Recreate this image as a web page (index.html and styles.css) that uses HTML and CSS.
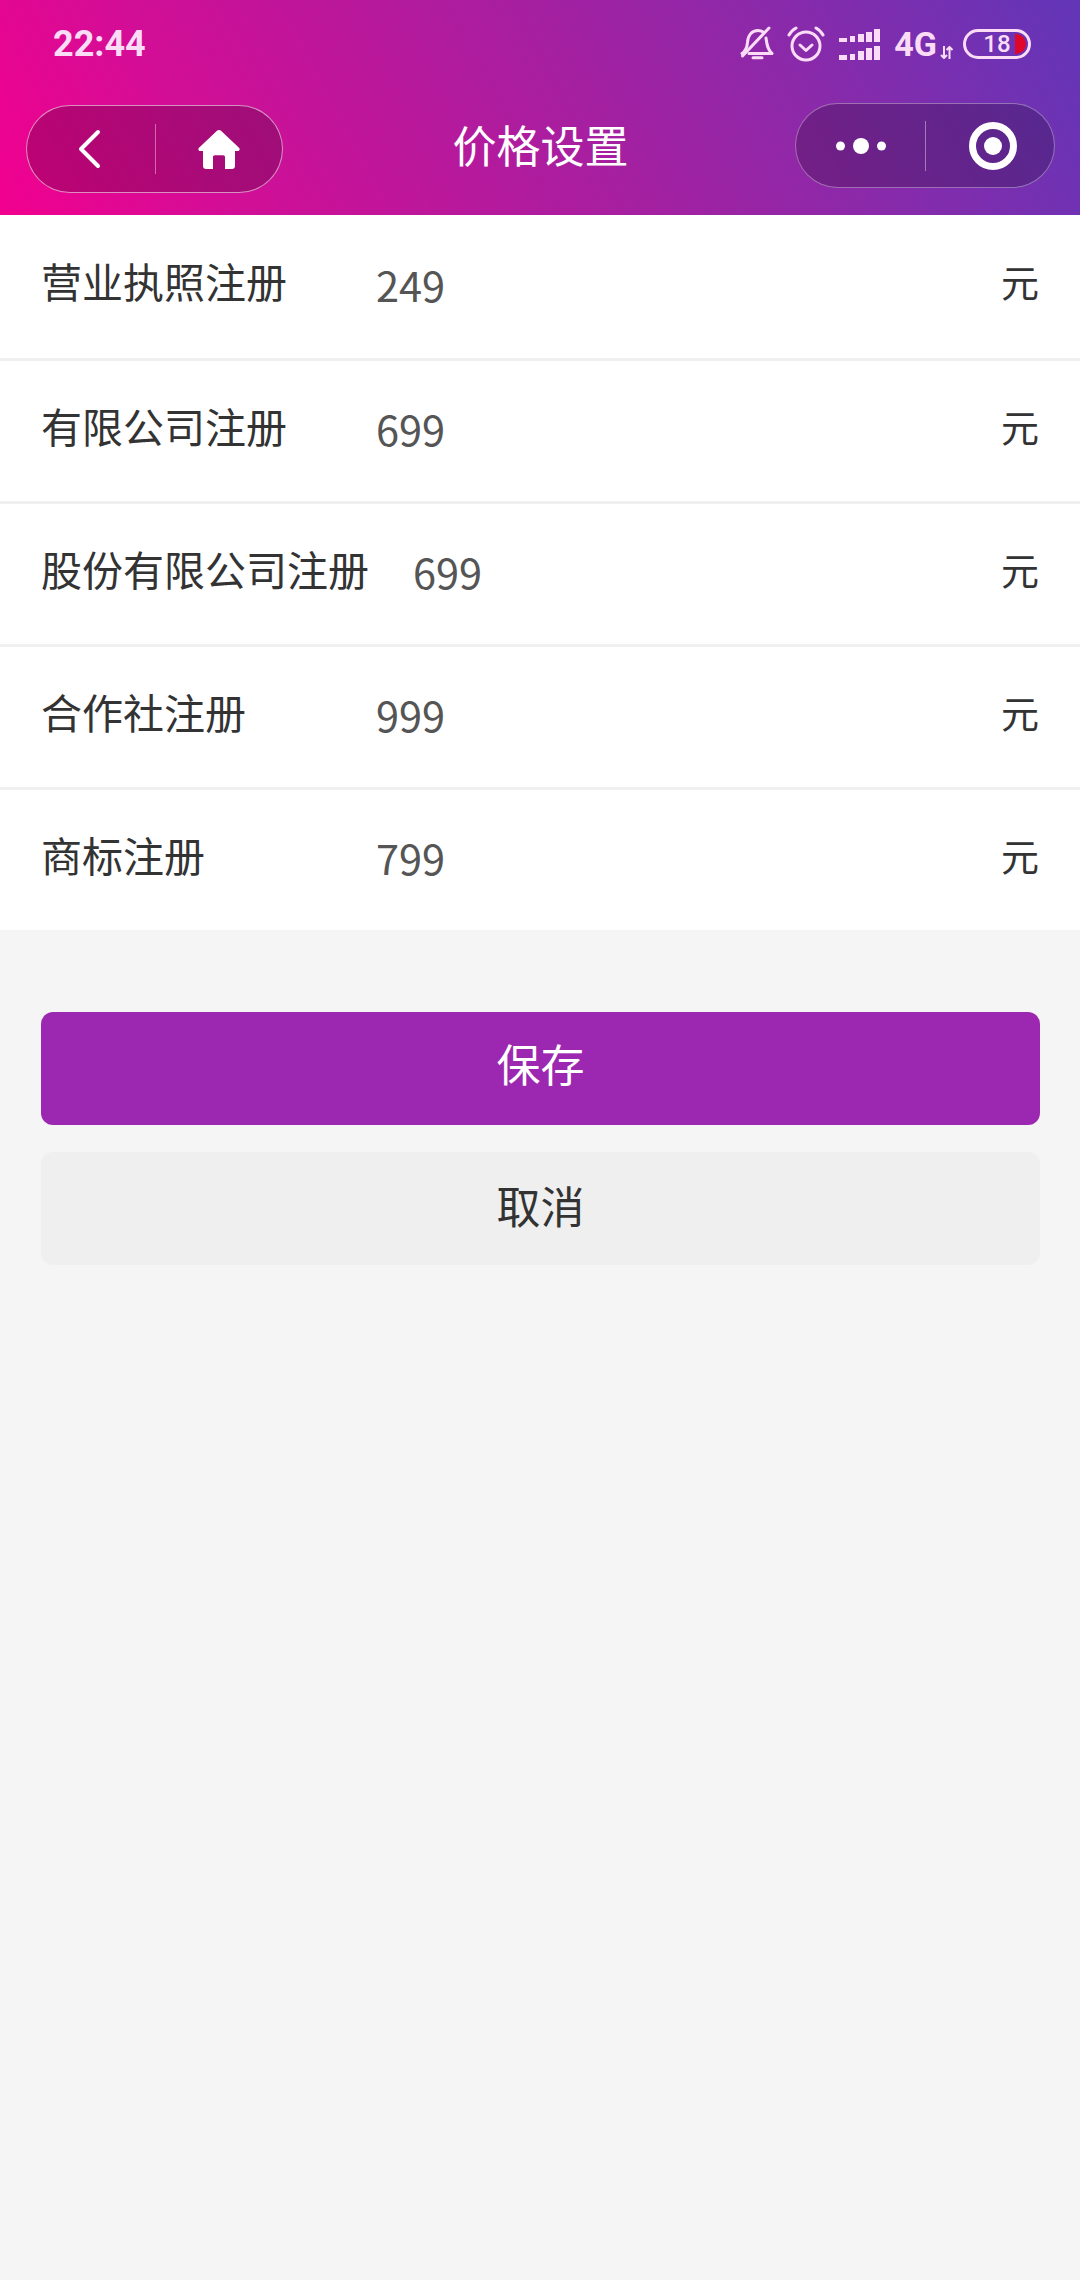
FILE: index.html
```html
<!DOCTYPE html>
<html lang="zh">
<head>
  <meta charset="utf-8">
  <title>价格设置</title>
  <link rel="stylesheet" href="styles.css">
</head>
<body>
  <header class="top">
    <div class="status">
      <span class="time">22:44</span>
      <div class="status-icons">
        <svg class="ic-bell" width="34" height="34" viewBox="0 0 34 34" fill="none" stroke="#fbdcf6" stroke-width="3" stroke-linecap="round" stroke-linejoin="round">
          <path d="M2 27.500c4-2.500 5-5.500 5.500-11C8 9 12 4.500 18 4.500c2.500 0 4.500 .8 6 2.200M26 12c.8 6 1.500 12 6 15.500H9"/>
          <path d="M2.500 30 29 2"/>
          <path d="M13 31.800h9"/>
        </svg>
        <svg class="ic-alarm" width="38" height="36" viewBox="0 0 38 36" fill="none" stroke="#fbdcf6" stroke-width="3" stroke-linecap="round" stroke-linejoin="round">
          <circle cx="19" cy="20" r="14"/>
          <path d="M13 19l6 5.500 6-5.500"/>
          <path d="M2 9c1.500-3 3.500-5 7-7M36 9c-1.500-3-3.500-5-7-7"/>
        </svg>
        <svg class="ic-signal" width="41" height="32" viewBox="0 0 41 32" fill="#fbdcf6">
          <rect x="0" y="9" width="8" height="4"/><rect x="11" y="7" width="5" height="6"/><rect x="19" y="5" width="6" height="8"/><rect x="27" y="3" width="6" height="10"/><rect x="35" y="0" width="6" height="13"/>
          <rect x="0" y="26" width="8" height="5"/><rect x="11" y="25" width="5" height="6"/><rect x="19" y="22" width="6" height="9"/><rect x="27" y="19" width="6" height="12"/><rect x="35" y="17" width="6" height="14"/>
        </svg>
        <span class="net">4G</span>
        <svg class="ic-arrows" width="13" height="13" viewBox="0 0 13 13" fill="none" stroke="#fbdcf6" stroke-width="2">
          <path d="M4 0v12M1 9l3 3 3-3M9.500 13V1M6.500 4l3-3 3 3"/>
        </svg>
        <div class="battery"><span class="battery-num">18</span><i class="battery-fill"></i></div>
      </div>
    </div>
    <nav class="nav">
      <div class="capsule capsule-left">
        <div class="capsule-cell cell-back">
          <svg width="24" height="40" viewBox="0 0 24 40" fill="none" stroke="#fff" stroke-width="4" stroke-linecap="round" stroke-linejoin="round"><path d="M21 3 4 20l17 17"/></svg>
        </div>
        <div class="capsule-cell">
          <svg width="42" height="39" viewBox="0 0 42 39" fill="#fff"><path d="M21 0c.8 0 1.500 .3 2 .8l18 17c1.300 1.200 .5 3.200-1.300 3.200H37v15c0 1.700-1.300 3-3 3h-7V27c0-1-.8-1.800-1.800-1.800h-8.400c-1 0-1.800 .8-1.800 1.800v12H8c-1.700 0-3-1.300-3-3V21H2.300C.5 21-.3 19 1 17.800l18-17c.5-.5 1.200-.8 2-.8z"/></svg>
        </div>
      </div>
      <h1 class="title">价格设置</h1>
      <div class="capsule capsule-right">
        <div class="capsule-cell">
          <svg width="50" height="18" viewBox="0 0 50 18" fill="#fff"><circle cx="4.500" cy="9" r="4.500"/><circle cx="25" cy="9" r="8"/><circle cx="45.500" cy="9" r="4.500"/></svg>
        </div>
        <div class="capsule-cell cell-target">
          <svg width="48" height="48" viewBox="0 0 48 48"><circle cx="24" cy="24" r="20.500" fill="none" stroke="#fff" stroke-width="7"/><circle cx="24" cy="24" r="9" fill="#fff"/></svg>
        </div>
      </div>
    </nav>
  </header>

  <section class="list">
    <div class="row"><div class="row-label">营业执照注册</div><div class="row-value">249</div><div class="row-unit">元</div></div>
    <div class="row"><div class="row-label">有限公司注册</div><div class="row-value">699</div><div class="row-unit">元</div></div>
    <div class="row"><div class="row-label">股份有限公司注册</div><div class="row-value">699</div><div class="row-unit">元</div></div>
    <div class="row"><div class="row-label">合作社注册</div><div class="row-value">999</div><div class="row-unit">元</div></div>
    <div class="row"><div class="row-label">商标注册</div><div class="row-value">799</div><div class="row-unit">元</div></div>
  </section>

  <div class="actions">
    <button class="btn btn-save" type="button">保存</button>
    <button class="btn btn-cancel" type="button">取消</button>
  </div>
</body>
</html>
```

FILE: styles.css
```css
* {
  box-sizing: border-box;
}

body {
  margin: 0;
  height: 2280px;
  overflow: hidden;
  background-color: #f5f5f5;
  font-family: "Noto Sans CJK SC", "Noto Sans", sans-serif;
  color: #333;
}

/* header */
.top {
  height: 215px;
  background: linear-gradient(62deg, #f2008f 0%, #d20e96 20%, #aa1e9f 50%, #8f28a8 70%, #6236b8 100%);
}

.status {
  height: 103px;
  padding: 26px 49px 0 53px;
  display: flex;
  justify-content: space-between;
  align-items: flex-start;
}

.time {
  font-family: Roboto, sans-serif;
  font-size: 36px;
  font-weight: 700;
  line-height: 36px;
  color: #fbdcf6;
}

.status-icons {
  display: flex;
  align-items: flex-start;
}

.ic-alarm {
  margin-left: 13px;
}

.ic-signal {
  margin: 3px 0 0 14px;
}

.net {
  font-family: Roboto, sans-serif;
  font-size: 34px;
  font-weight: 700;
  line-height: 36px;
  margin-left: 14px;
  color: #fbdcf6;
}

.ic-arrows {
  margin: 20px 0 0 3px;
}

.battery {
  width: 68px;
  height: 30px;
  margin: 3px 0 0 10px;
  border: 3px solid #fbdcf6;
  border-radius: 15px;
  position: relative;
  display: flex;
  align-items: center;
  justify-content: center;
  overflow: hidden;
}

.battery-num {
  font-family: Roboto, sans-serif;
  font-size: 24px;
  font-weight: 500;
  line-height: 24px;
  color: #fbdcf6;
}

.battery-fill {
  position: absolute;
  right: 2px;
  top: 2px;
  bottom: 2px;
  width: 11px;
  background-color: #e0062a;
  border-radius: 0 10px 10px 0;
}

.nav {
  display: grid;
  grid-template-columns: 1fr auto 1fr;
  align-items: start;
  padding: 0 25px 0 26px;
}

.title {
  margin: 0;
  font-size: 44px;
  font-weight: 400;
  line-height: 82px;
  color: #fff;
}

.capsule {
  display: grid;
  grid-template-columns: 1fr 1fr;
  align-items: center;
  border-radius: 45px;
  background-color: rgba(0, 0, 0, 0.2);
}

.capsule-left {
  width: 257px;
  height: 88px;
  margin-top: 2px;
  border: 1px solid rgba(255, 255, 255, 0.55);
  justify-self: start;
}

.capsule-right {
  width: 260px;
  height: 85px;
  border: 1px solid rgba(255, 255, 255, 0.35);
  justify-self: end;
}

.capsule-cell {
  height: 50px;
  display: flex;
  align-items: center;
  justify-content: center;
}

.capsule-cell + .capsule-cell {
  border-left: 1px solid rgba(255, 255, 255, 0.4);
}

.cell-back {
  padding-right: 4px;
}

.cell-target {
  padding-left: 6px;
}

/* price rows */
.list {
  background-color: #fff;
}

.row {
  height: 143px;
  padding: 0 41px;
  display: flex;
  align-items: center;
  gap: 44px;
  border-bottom: 3px solid #f0f0f0;
  font-size: 41px;
}

.row:first-child {
  height: 146px;
}

.row:last-child {
  height: 140px;
  border-bottom: none;
}

.row-label {
  min-width: 291px;
  padding-bottom: 13px;
}

.row-value {
  flex: 1;
  padding-bottom: 6px;
  font-size: 41.5px;
  color: #555;
}

.row-unit {
  padding-bottom: 12px;
  font-size: 38px;
}

/* buttons */
.actions {
  padding: 82px 40px 0 41px;
  display: flex;
  flex-direction: column;
  gap: 27px;
}

.btn {
  height: 113px;
  border: none;
  border-radius: 12px;
  font-family: inherit;
  font-size: 44px;
  cursor: pointer;
}

.btn-save {
  padding-bottom: 12px;
  background-color: #9c27b0;
  color: #fff;
}

.btn-cancel {
  padding-bottom: 8px;
  background-color: #efefef;
  color: #333;
}
```
